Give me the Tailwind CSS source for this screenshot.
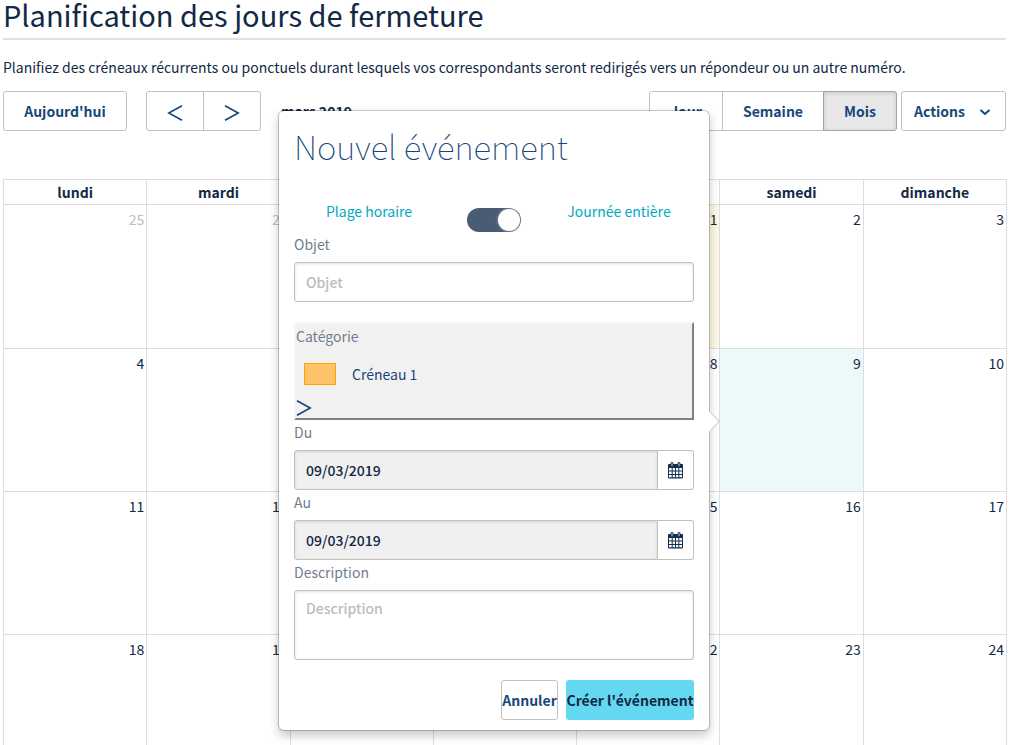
<!DOCTYPE html>
<html lang="fr">
<head>
<meta charset="utf-8">
<title>Planification des jours de fermeture</title>
<script src="https://cdn.jsdelivr.net/npm/@tailwindcss/browser@4"></script>
</head>
<body class="bg-white">
<main class="relative h-screen overflow-hidden px-[3px] font-['Noto_Sans_CJK_SC','Noto_Sans',sans-serif] text-[14px] leading-5 text-[#122844]">
  <h1 class="h-10 border-b-2 border-[#e0e0e0] text-[29px] leading-7">Planification des jours de fermeture</h1>
  <p class="mt-[17px]">Planifiez des créneaux récurrents ou ponctuels durant lesquels vos correspondants seront redirigés vers un répondeur ou un autre numéro.</p>

  <div class="mt-[14px] flex h-10 items-stretch font-medium text-[#15477a]">
    <button type="button" class="w-[124px] rounded-[3px] border border-[#c0c0c0] font-bold">Aujourd'hui</button>
    <div class="ml-[19px] flex">
      <button type="button" aria-label="Mois précédent" class="flex w-[58px] items-center justify-center rounded-l-[3px] border border-[#c0c0c0]">
        <svg class="mt-1 size-4" viewBox="0 0 16 16" fill="none" stroke="currentColor" stroke-width="1.6"><path d="M15 .8 1.8 8 15 15.2"/></svg>
      </button>
      <button type="button" aria-label="Mois suivant" class="-ml-px flex w-[58px] items-center justify-center rounded-r-[3px] border border-[#c0c0c0]">
        <svg class="mt-1 size-4" viewBox="0 0 16 16" fill="none" stroke="currentColor" stroke-width="1.6"><path d="M1 .8 14.2 8 1 15.2"/></svg>
      </button>
    </div>
    <h2 class="ml-5 self-center font-bold text-[#122844]">mars 2019</h2>
    <div class="ml-auto flex font-bold">
      <button type="button" class="w-[74px] rounded-l-[3px] border border-[#c0c0c0]">Jour</button>
      <button type="button" class="-ml-px w-[102px] border border-[#c0c0c0]">Semaine</button>
      <button type="button" aria-pressed="true" class="-ml-px w-[74px] rounded-r-[3px] border border-[#a3a3a7] bg-[#e8e8e8] shadow-[inset_0_1px_4px_rgba(0,0,0,0.15)]">Mois</button>
    </div>
    <button type="button" class="ml-1 flex w-[105px] items-center justify-between rounded-[3px] border border-[#c0c0c0] pr-[14px] pl-3 font-bold">Actions
      <svg class="mt-px h-3 w-3" viewBox="0 0 12 12" fill="none" stroke="currentColor" stroke-width="2"><path d="m1.500 4 4.500 4 4.500-4"/></svg>
    </button>
  </div>

  <table class="mt-12 w-[calc(100%+1px)] table-fixed border-collapse">
    <thead>
      <tr class="h-[25px] [&>th]:border [&>th]:border-[#ddd] [&>th]:p-0 [&>th]:font-bold">
        <th>lundi</th><th>mardi</th><th>mercredi</th><th>jeudi</th><th>vendredi</th><th>samedi</th><th>dimanche</th>
      </tr>
    </thead>
    <tbody class="text-right align-top [&_td]:border [&_td]:border-[#ddd] [&_td]:px-[2px] [&_td]:py-1 [&_td]:align-top">
      <tr class="h-36"><td class="text-[#b8bec7]">25</td><td class="text-[#b8bec7]">26</td><td class="text-[#b8bec7]">27</td><td class="text-[#b8bec7]">28</td><td class="bg-[#fcf8e3]">1</td><td>2</td><td>3</td></tr>
      <tr class="h-[143px]"><td>4</td><td>5</td><td>6</td><td>7</td><td>8</td><td class="bg-[#edf8fb]">9</td><td>10</td></tr>
      <tr class="h-[143px]"><td>11</td><td>12</td><td>13</td><td>14</td><td>15</td><td>16</td><td>17</td></tr>
      <tr class="h-[143px]"><td>18</td><td>19</td><td>20</td><td>21</td><td>22</td><td>23</td><td>24</td></tr>
    </tbody>
  </table>

  <form class="absolute top-[110px] left-[278px] w-[432px] rounded-md border border-black/20 bg-white bg-clip-padding px-[15px] pb-[10px] shadow-[0_5px_10px_rgba(0,0,0,0.2)]" aria-labelledby="titre">
    <span class="absolute top-[303px] -right-2 size-[15px] rotate-45 border-t border-r border-[#ccc] bg-white"></span>
    <h2 id="titre" class="pt-[14px] text-[33px] leading-[42px] font-thin text-[#15477a]">Nouvel événement</h2>
    <div class="mt-[34px] grid h-8 grid-cols-8 text-center text-[#00a9c4]">
      <label for="journee" class="col-span-3">Plage horaire</label>
      <input id="journee" type="checkbox" role="switch" checked aria-label="Journée entière" class="col-span-2 mt-[7px] h-6 w-[54px] appearance-none justify-self-center rounded-full bg-[#4a5b74] before:mt-px before:ml-[31px] before:block before:size-[22px] before:rounded-full before:bg-white before:shadow-[0_0_3px_rgba(255,255,255,0.5)]">
      <label for="journee" class="col-span-3">Journée entière</label>
    </div>
    <label for="objet" class="mt-[1px] block text-[#6f7d8f]">Objet</label>
    <input id="objet" type="text" placeholder="Objet" class="mt-2 block h-10 w-full rounded-[3px] border border-[#c0c0c0] px-[11px] font-medium shadow-[inset_0_1px_3px_rgba(0,0,0,0.12)] placeholder:text-[#bcbcbc]">
    <button type="button" class="mt-5 block h-[98px] w-full border-2 border-t-[#f5f5f5] border-r-[#808080] border-b-[#808080] border-l-[#f5f5f5] bg-[#f1f1f1] pt-[2px] text-left text-[#15477a]">
      <span class="block text-[#6f7d8f]">Catégorie</span>
      <span class="mt-[14px] flex h-[31px] items-start gap-4 pl-2"><span class="mt-[3px] h-[22px] w-8 border border-[#ffa500] bg-[#fcc36b]"></span><span class="mt-1">Créneau 1</span></span>
      <svg class="mt-[9px] mb-[3px] size-4" viewBox="0 0 16 16" fill="none" stroke="currentColor" stroke-width="1.600"><path d="M1 .8 14.200 8 1 15.200"/></svg>
    </button>
    <label for="du" class="mt-[2px] block text-[#6f7d8f]">Du</label>
    <div class="mt-2 flex h-10">
      <input id="du" type="text" readonly value="09/03/2019" class="min-w-0 flex-1 rounded-l-[3px] border border-[#c0c0c0] bg-[#f0f0f0] px-[11px] font-medium shadow-[inset_0_1px_3px_rgba(0,0,0,0.12)]">
      <button type="button" aria-label="Choisir la date de début" class="flex w-9 items-center justify-center rounded-r-[3px] border border-l-0 border-[#c0c0c0]">
        <svg class="h-[17px] w-[15px]" viewBox="0 0 15 17"><rect y="2" width="15" height="14.500" rx="1" fill="#122f50"/><path fill="#fff" d="M1 6h2.700v2.600H1zM4.700 6h2.300v2.600H4.700zM8 6h2.300v2.600H8zM11.300 6H14v2.600h-2.700zM1 9.500h2.700V12H1zM4.700 9.500H7V12H4.700zM8 9.500h2.300V12H8zM11.300 9.500H14V12h-2.700zM1 13h2.700v2.300H1zM4.700 13H7v2.300H4.700zM8 13h2.300v2.300H8zM11.300 13H14v2.300h-2.700z"/><path d="M4 1.500v2.300M11 1.500v2.300" stroke="#122f50" stroke-width="3" stroke-linecap="round"/><path d="M4 1.500v2.300M11 1.500v2.300" stroke="#b4bdc8" stroke-width="1.200" stroke-linecap="round"/></svg>
      </button>
    </div>
    <label for="au" class="mt-[2px] block text-[#6f7d8f]">Au</label>
    <div class="mt-2 flex h-10">
      <input id="au" type="text" readonly value="09/03/2019" class="min-w-0 flex-1 rounded-l-[3px] border border-[#c0c0c0] bg-[#f0f0f0] px-[11px] font-medium shadow-[inset_0_1px_3px_rgba(0,0,0,0.12)]">
      <button type="button" aria-label="Choisir la date de fin" class="flex w-9 items-center justify-center rounded-r-[3px] border border-l-0 border-[#c0c0c0]">
        <svg class="h-[17px] w-[15px]" viewBox="0 0 15 17"><rect y="2" width="15" height="14.500" rx="1" fill="#122f50"/><path fill="#fff" d="M1 6h2.700v2.600H1zM4.700 6h2.300v2.600H4.700zM8 6h2.300v2.600H8zM11.300 6H14v2.600h-2.700zM1 9.500h2.700V12H1zM4.700 9.500H7V12H4.700zM8 9.500h2.300V12H8zM11.300 9.500H14V12h-2.700zM1 13h2.700v2.300H1zM4.700 13H7v2.300H4.700zM8 13h2.300v2.300H8zM11.300 13H14v2.300h-2.700z"/><path d="M4 1.500v2.300M11 1.500v2.300" stroke="#122f50" stroke-width="3" stroke-linecap="round"/><path d="M4 1.500v2.300M11 1.500v2.300" stroke="#b4bdc8" stroke-width="1.200" stroke-linecap="round"/></svg>
      </button>
    </div>
    <label for="description" class="mt-[2px] block text-[#6f7d8f]">Description</label>
    <textarea id="description" placeholder="Description" class="mt-2 block h-[70px] w-full resize-none rounded-[3px] border border-[#c0c0c0] px-[11px] py-[7px] font-medium shadow-[inset_0_1px_3px_rgba(0,0,0,0.12)] placeholder:text-[#bcbcbc]"></textarea>
    <div class="mt-5 flex h-10 justify-end gap-2 font-bold whitespace-nowrap">
      <button type="button" class="w-[57px] rounded-[3px] border border-[#c0c0c0] text-[#15477a]"><span class="-mx-1">Annuler</span></button>
      <button type="submit" class="w-32 rounded-[3px] bg-[#64d8f0] text-[#122844]">Créer l'événement</button>
    </div>
  </form>
</main>
</body>
</html>
